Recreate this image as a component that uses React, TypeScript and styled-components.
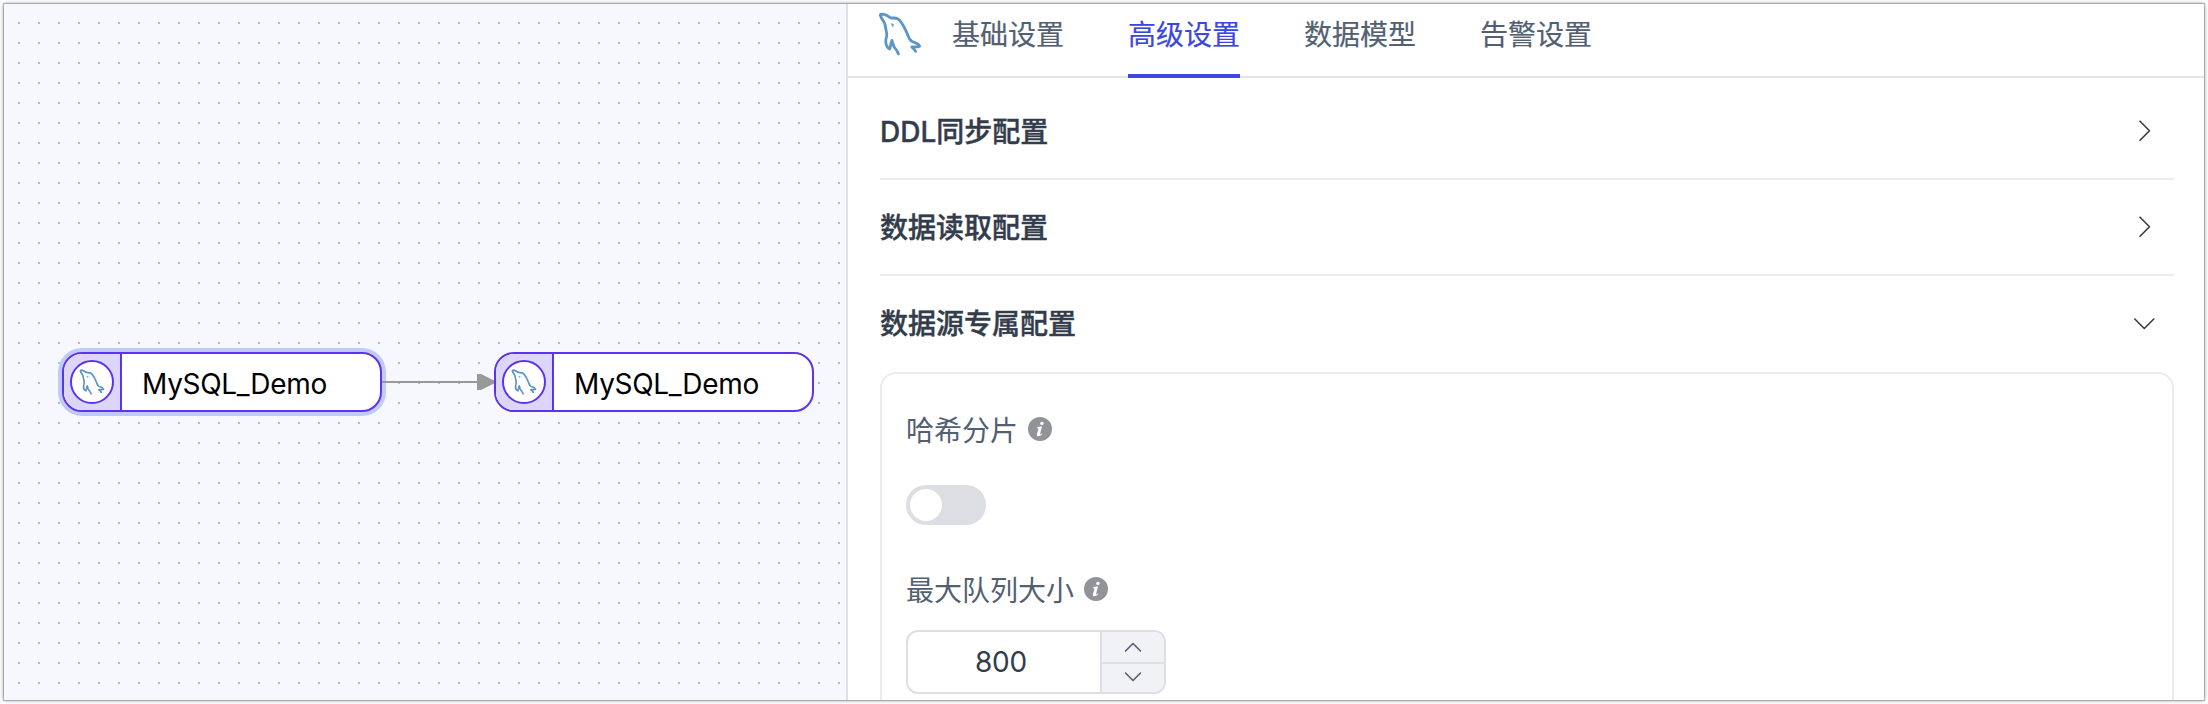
import React from 'react';
import styled, { createGlobalStyle, css } from 'styled-components';

const GlobalStyle = createGlobalStyle`
  *, *::before, *::after { box-sizing: border-box; }
  body {
    margin: 0;
    background: #fff;
    font-family: Inter, "Noto Sans CJK SC", sans-serif;
    font-size: 28px;
  }
`;

const Page = styled.div`
  height: 704px;
  padding: 4px;
  overflow: hidden;
`;

const Frame = styled.div`
  display: flex;
  height: 696px;
  background: #fff;
  overflow: hidden;
  box-shadow: 0 0 1px 1px rgba(0, 0, 0, 0.22), 0 0 5px rgba(0, 0, 0, 0.35);
`;

const Canvas = styled.main`
  position: relative;
  flex: none;
  width: 842px;
  background: conic-gradient(from 270deg at 2px 2px, #b9babf 90deg, #f7f8fd 0) 14px 18px / 20px 20px;
`;

const Edge = styled.svg`
  position: absolute;
  z-index: 1;
  left: 378px;
  top: 368px;
`;

const Node = styled.div<{ $x: number; $selected?: boolean }>`
  position: absolute;
  left: ${(p) => p.$x}px;
  top: 348px;
  display: flex;
  width: 320px;
  height: 60px;
  border: 2px solid #5b33f0;
  border-radius: 20px;
  background: #fff;
  overflow: hidden;
  ${(p) => p.$selected && css`box-shadow: 0 0 0 4px #bfcbfa;`}
`;

const NodeIcon = styled.div`
  display: flex;
  align-items: center;
  justify-content: center;
  width: 58px;
  border-right: 2px solid #5b33f0;
  background: #ddd6fc;
`;

const IconRing = styled.span`
  display: flex;
  align-items: center;
  justify-content: center;
  width: 44px;
  height: 44px;
  border: 2px solid #5b33f0;
  border-radius: 50%;
  background: #fff;
`;

const NodeName = styled.span`
  padding-left: 20px;
  line-height: 60px;
  letter-spacing: -0.3px;
  color: #000;
`;

const Panel = styled.aside`
  flex: 1;
  display: flex;
  flex-direction: column;
  border-left: 2px solid #dee0e6;
`;

const TabBar = styled.nav`
  display: flex;
  flex: none;
  height: 74px;
  padding-left: 30px;
  border-bottom: 2px solid #e5e6eb;
`;

const TabLogo = styled.span`
  width: 44px;
  margin-right: 30px;
  padding-top: 8px;
`;

const Tab = styled.a<{ $active?: boolean }>`
  height: 74px;
  margin-right: 64px;
  line-height: 62px;
  color: ${(p) => (p.$active ? '#3b47e0' : '#535f72')};
  border-bottom: 4px solid ${(p) => (p.$active ? '#3b47e0' : 'transparent')};
  -webkit-text-stroke: 0.2px currentColor;
`;

const Sections = styled.div`
  flex: 1;
  min-height: 0;
  padding: 6px 30px 0 32px;
  overflow: hidden;
`;

const SectionHeader = styled.div<{ $open?: boolean }>`
  display: flex;
  align-items: center;
  justify-content: space-between;
  height: 96px;
  padding: 0 16px ${(p) => (p.$open ? 4 : 2)}px 0;
  border-bottom: ${(p) => (p.$open ? 0 : 2)}px solid #ebedf4;
  color: #333c4a;
  font-weight: 500;
  -webkit-text-stroke: 0.4px currentColor;
`;

const Card = styled.div`
  height: 400px;
  padding: 36px 24px;
  border: 2px solid #ebecf3;
  border-radius: 16px;
`;

const Label = styled.div`
  display: flex;
  align-items: center;
  gap: 10px;
  height: 38px;
  color: #535f72;
`;

const Switch = styled.div`
  width: 80px;
  height: 40px;
  margin: 37px 0 45px;
  padding: 4px;
  border-radius: 20px;
  background: #dddee4;
`;

const Knob = styled.div`
  width: 32px;
  height: 32px;
  border-radius: 50%;
  background: #fff;
`;

const NumberInput = styled.div`
  display: flex;
  width: 260px;
  height: 64px;
  margin-top: 22px;
  border: 2px solid #dddee6;
  border-radius: 12px;
  overflow: hidden;
`;

const NumberValue = styled.span`
  flex: 1;
  padding-right: 6px;
  line-height: 61px;
  text-align: center;
  letter-spacing: -0.2px;
  color: #333c4a;
`;

const Stepper = styled.div`
  display: flex;
  flex-direction: column;
  width: 64px;
  border-left: 2px solid #dddee6;
  background: #f1f2f5;
`;

const Step = styled.span<{ $first?: boolean }>`
  display: flex;
  align-items: center;
  justify-content: center;
  height: ${(p) => (p.$first ? 32 : 26)}px;
  border-bottom: ${(p) => (p.$first ? 2 : 0)}px solid #dddee6;
`;

const Dolphin = ({ size, weight }: { size: number; weight: number }) => (
  <svg width={size} height={size} viewBox="0 0 44 44" fill="none" stroke="#5c96c8" strokeWidth={weight} strokeLinecap="round" strokeLinejoin="round" display="block">
    <path d="M20.5 42C19.6 39.4 18.3 37.5 16.6 35.6C15.3 34 14.9 31.2 14 28.4C12.6 31.5 12.7 34.6 11.6 37C9 35.8 7.4 31.8 7.8 28.4C8 26 9.4 23.8 8.6 20.6C7.5 17.4 7.9 13.8 6.3 10.6C4.9 8 3 6.2 2.4 3.4C2 1.5 4.2 2 6 2.4C9 2.9 10.4 4.6 12.6 5.8C15 6.3 17.4 5.6 19.8 6.8C24.6 10 26.4 15.6 29.2 21.6C30.4 24.5 30.9 27.3 33.4 29C37 31 40.6 31.4 41.6 34.2C39.2 35.4 36.5 34.8 33.8 35C35.2 36.8 37 37.6 37.6 39.4" />
    <path d="M13.8 11.8C15.6 11.8 15.9 13.4 15 14.4Z" fill="#5c96c8" strokeWidth="0.8" />
  </svg>
);

const Chevron = ({ w, h, d, color = '#333c4a' }: { w: number; h: number; d: string; color?: string }) => (
  <svg width={w} height={h} fill="none" stroke={color} strokeWidth="1.6" strokeLinecap="round" strokeLinejoin="round">
    <path d={d} />
  </svg>
);

const RIGHT = 'M10 5.2L19.5 14.7L10 24.2';
const DOWN = 'M4.8 11L14.3 20.5L23.8 11';

const Info = () => (
  <svg width="24" height="24" viewBox="0 0 24 24">
    <circle cx="12" cy="12" r="12" fill="#919399" />
    <circle cx="13.9" cy="6.4" r="1.7" fill="#fff" />
    <path d="M9 10.6C10.8 9.9 12.2 9.4 14.1 9.3L12.1 16.7C11.8 18 12.7 17.6 13.9 16.3L14.4 16.8C12.9 18.6 11.6 19.3 10.2 19.3C8.8 19.3 8.6 18.3 9 16.9L10.3 12.2C10.5 11.3 10 11.2 9 11.3Z" fill="#fff" />
  </svg>
);

const NODES = [
  { x: 58, name: 'MySQL_Demo', selected: true },
  { x: 490, name: 'MySQL_Demo', selected: false },
];
const TABS = ['基础设置', '高级设置', '数据模型', '告警设置'];
const SECTIONS = [
  { title: 'DDL同步配置', open: false },
  { title: '数据读取配置', open: false },
  { title: '数据源专属配置', open: true },
];

export default function App() {
  return (
    <Page>
      <GlobalStyle />
      <Frame>
        <Canvas>
          <Edge width="112" height="20">
            <path d="M0 10H98" stroke="#999" strokeWidth="2" />
            <path d="M95 2H99L112 8.6V11.4L99 18H95Z" fill="#999" />
          </Edge>
          {NODES.map((n) => (
            <Node key={n.x} $x={n.x} $selected={n.selected}>
              <NodeIcon>
                <IconRing>
                  <Dolphin size={26} weight={2.8} />
                </IconRing>
              </NodeIcon>
              <NodeName>{n.name}</NodeName>
            </Node>
          ))}
        </Canvas>
        <Panel>
          <TabBar>
            <TabLogo>
              <Dolphin size={44} weight={2.8} />
            </TabLogo>
            {TABS.map((t, i) => (
              <Tab key={t} $active={i === 1}>{t}</Tab>
            ))}
          </TabBar>
          <Sections>
            {SECTIONS.map((s) => (
              <SectionHeader key={s.title} $open={s.open}>
                {s.title}
                <Chevron w={28} h={28} d={s.open ? DOWN : RIGHT} />
              </SectionHeader>
            ))}
            <Card>
              <Label>哈希分片<Info /></Label>
              <Switch><Knob /></Switch>
              <Label>最大队列大小<Info /></Label>
              <NumberInput>
                <NumberValue>800</NumberValue>
                <Stepper>
                  <Step $first><Chevron w={18} h={12} d="M1.5 10L9 2.5L16.5 10" color="#535f72" /></Step>
                  <Step><Chevron w={18} h={12} d="M1.5 2L9 9.5L16.5 2" color="#535f72" /></Step>
                </Stepper>
              </NumberInput>
            </Card>
          </Sections>
        </Panel>
      </Frame>
    </Page>
  );
}
